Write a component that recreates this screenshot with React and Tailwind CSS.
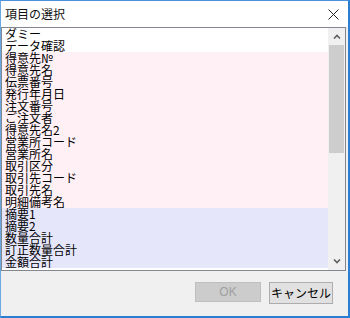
import React from 'react';

const items = [
  { label: 'ダミー', tone: 'white' },
  { label: 'データ確認', tone: 'white' },
  { label: '得意先№', tone: 'pink' },
  { label: '得意先名', tone: 'pink' },
  { label: '伝票番号', tone: 'pink' },
  { label: '発行年月日', tone: 'pink' },
  { label: '注文番号', tone: 'pink' },
  { label: 'ご注文者', tone: 'pink' },
  { label: '得意先名2', tone: 'pink' },
  { label: '営業所コード', tone: 'pink' },
  { label: '営業所名', tone: 'pink' },
  { label: '取引区分', tone: 'pink' },
  { label: '取引先コード', tone: 'pink' },
  { label: '取引先名', tone: 'pink' },
  { label: '明細備考名', tone: 'pink' },
  { label: '摘要1', tone: 'lavender' },
  { label: '摘要2', tone: 'lavender' },
  { label: '数量合計', tone: 'lavender' },
  { label: '訂正数量合計', tone: 'lavender' },
  { label: '金額合計', tone: 'lavender' },
];

const toneClass = {
  white: 'bg-white',
  pink: 'bg-[#fff0f5]',
  lavender: 'bg-[#e6e6fa]',
};

export default function App() {
  return (
    <div className="w-[350px] h-[318px] flex flex-col bg-[#f0f0f0] border-t border-l border-r-2 border-b-2 border-t-[#4a93dc] border-l-[#6aa8e4] border-r-[#2b7fd3] border-b-[#2b7fd3] font-['Noto_Sans_CJK_JP',sans-serif] text-black overflow-hidden">
      {/* Title bar */}
      <div className="h-[26px] bg-white flex items-center justify-between pl-[4px] pr-[9px]">
        <span className="text-[12px] leading-none text-[#111]">項目の選択</span>
        <CloseIcon className="w-[11px] h-[11px] text-[#222]" />
      </div>

      {/* List box */}
      <div className="h-[244px] mr-[2px] flex border border-[#828790] bg-white">
        <div className="flex-1 flex flex-col">
          {items.map((item) => (
            <div
              key={item.label}
              className={cn('h-[12px] pl-[3px] text-[12px] leading-[12px] whitespace-nowrap', toneClass[item.tone])}
            >
              {item.label}
            </div>
          ))}
        </div>

        {/* Scrollbar */}
        <div className="w-[17px] flex flex-col bg-[#f0f0f0]">
          <div className="h-[17px] flex items-center justify-center">
            <Chevron up className="w-[8px] h-[5px] text-[#606060]" />
          </div>
          <div className="h-[108px] mx-[1px] bg-[#cdcdcd]" />
          <div className="flex-1" />
          <div className="h-[17px] flex items-center justify-center">
            <Chevron className="w-[8px] h-[5px] text-[#606060]" />
          </div>
        </div>
      </div>

      {/* Footer buttons */}
      <div className="flex-1 flex justify-end items-start gap-[8px] pt-[11px] pr-[15px]">
        <button
          disabled
          className="w-[66px] h-[20px] bg-[#cccccc] border border-[#bfbfbf] text-[12px] leading-none text-[#a0a0a0] font-['Liberation_Sans',sans-serif]"
        >
          OK
        </button>
        <button className="w-[64px] h-[22px] bg-[#e1e1e1] border border-[#adadad] text-[12px] leading-none text-black">
          キャンセル
        </button>
      </div>
    </div>
  );
}

function CloseIcon(props) {
  return (
    <svg {...props} viewBox="0 0 11 11" fill="none" stroke="currentColor" strokeWidth="1">
      <path d="M0.5 0.5 L10.5 10.5 M10.5 0.5 L0.5 10.5" />
    </svg>
  );
}

function Chevron({ up, ...props }) {
  return (
    <svg {...props} viewBox="0 0 8 5" fill="none" stroke="currentColor" strokeWidth="1.6">
      <path d={up ? 'M1 4.5 L4 1.5 L7 4.5' : 'M1 0.5 L4 3.5 L7 0.5'} />
    </svg>
  );
}

function cn(...inputs) {
  return inputs.filter(Boolean).join(' ');
}
